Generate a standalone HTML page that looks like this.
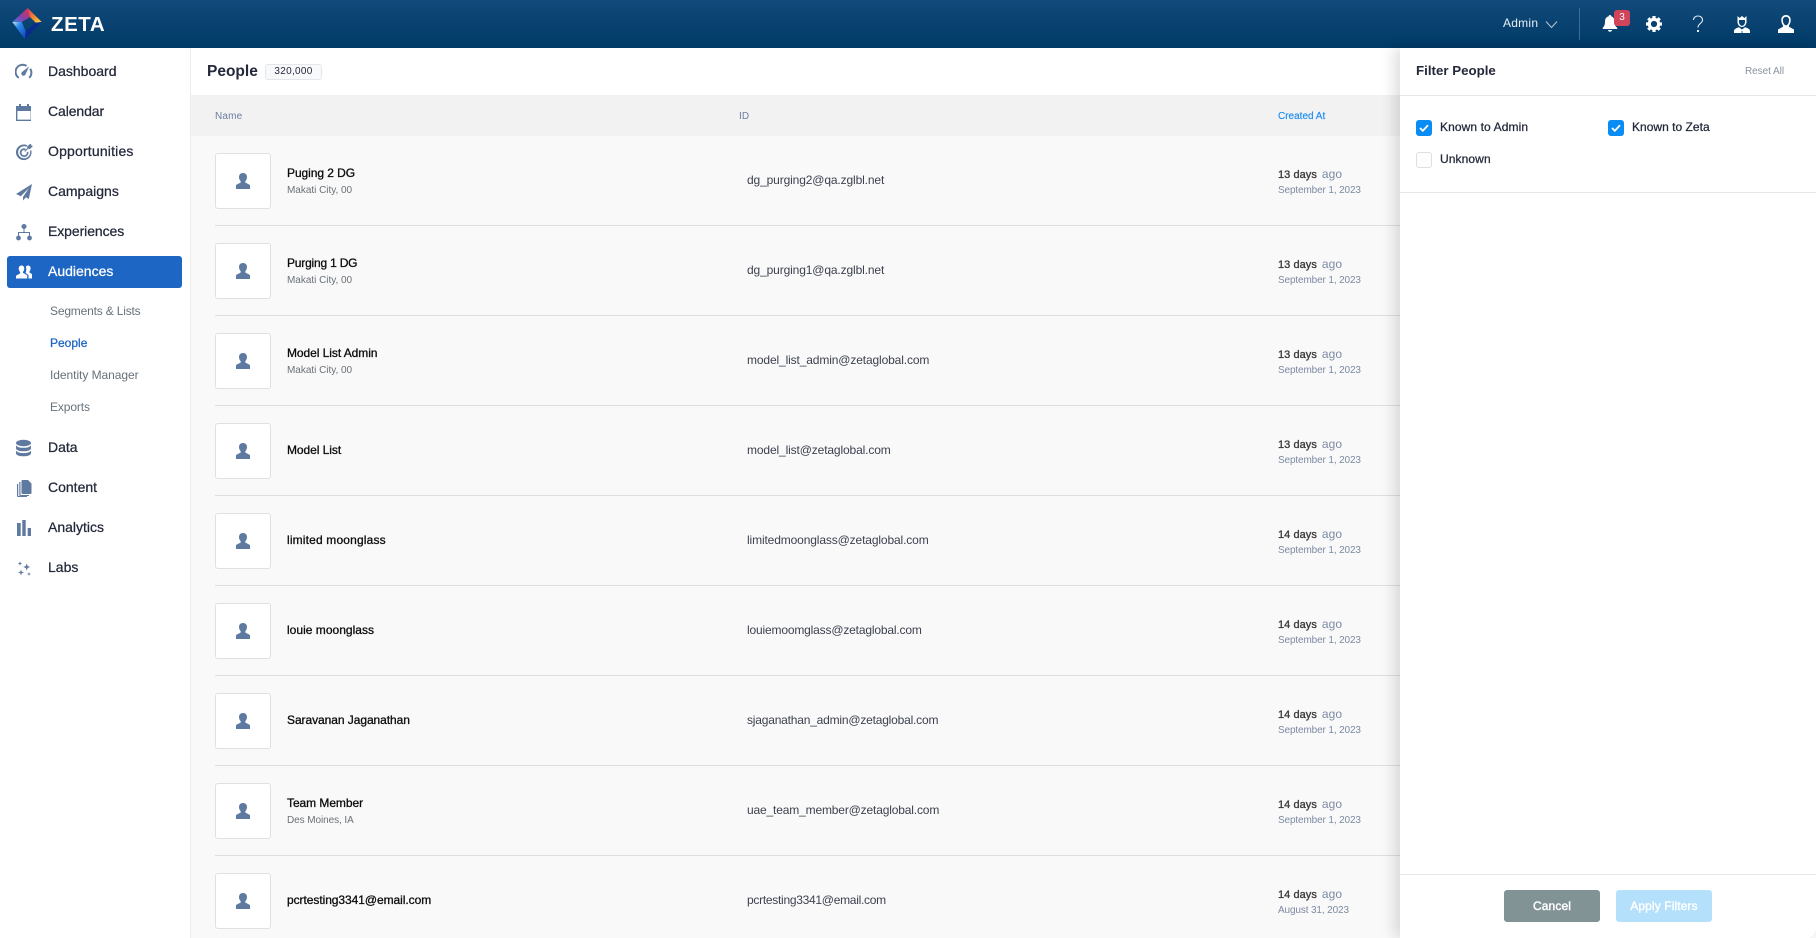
<!DOCTYPE html>
<html><head><meta charset="utf-8"><title>People</title>
<style>
html,body{margin:0;padding:0;width:1816px;height:938px;overflow:hidden;background:#2a1410}
body{font-family:"Liberation Sans",sans-serif;position:relative}
.a,.t{position:absolute}
.t{white-space:nowrap;line-height:16px;height:16px}
#bg{left:0;top:48px;width:1816px;height:890px;background:#f9f9f9}
#hdr{left:0;top:0;width:1816px;height:48px;background:linear-gradient(#124a7b,#003a66)}
#side{left:0;top:48px;width:190px;height:890px;background:#fff;border-right:1px solid #ececec}
#top{left:191px;top:48px;width:1209px;height:47px;background:#fff}
#th{left:191px;top:95px;width:1209px;height:41px;background:#f2f2f2}
.n{left:48px;font-size:14px;color:#23283a;-webkit-text-stroke:.25px #23283a;letter-spacing:0}
.s{left:50px;font-size:12px;color:#68717a;letter-spacing:-.12px}
.ic{position:absolute;left:15px;width:18px;height:18px;fill:#5f7aa0}
.h{font-size:10px;color:#6b7f9e;letter-spacing:.15px}
.l{left:215px;width:1185px;height:1px;background:#dedede}
.av{left:215px;width:54px;height:54px;background:#fff;border:1px solid #e0e0e0;border-radius:3px}
.av svg{position:absolute;left:20px;top:19px;width:14px;height:16px;fill:#5f7aa0}
.nm{left:287px;font-size:12px;color:#0c0c0c;-webkit-text-stroke:.3px #0c0c0c;letter-spacing:-.06px}
.sb{left:287px;font-size:10px;color:#6a7177;letter-spacing:-.02px}
.id{left:747px;font-size:12px;color:#3d4150;letter-spacing:-.13px}
.dy{left:1278px;font-size:11px;color:#3c3c3c;letter-spacing:.05px}
.dy b{font-weight:normal;-webkit-text-stroke:.35px #3c3c3c;margin-right:5px}
.dy i{font-style:normal;color:#7d8aa3;font-size:12px}
.dt{left:1278px;font-size:10px;color:#7d8aa3;letter-spacing:-.13px}
#panel{left:1400px;top:48px;width:416px;height:890px;background:#fff;border-bottom-right-radius:10px;box-shadow:-6px 0 14px rgba(0,0,0,.13)}
.pl{left:1400px;width:416px;height:1px;background:#e6e6e6}
.cb{left:1416px;width:16px;height:16px;border-radius:3px;background:#0a8cf5}
.cb svg{position:absolute;left:3px;top:4px;width:10px;height:8px}
.cl{font-size:12px;color:#23283a;-webkit-text-stroke:.25px #23283a;letter-spacing:.1px}
.btn{top:890px;width:96px;height:32px;border-radius:3px;color:#fff;font-size:12px;-webkit-text-stroke:.4px #fff;text-align:center;line-height:32px;letter-spacing:.12px}
</style></head><body>
<svg width="0" height="0" style="position:absolute"><symbol id="p" viewBox="0 0 14 16"><path d="M7 0c2.500 0 4 1.700 4 4 0 1.700-.7 3.200-1.700 4.200v1.300L14 12v4H0v-4l4.700-2.500V8.200C3.700 7.200 3 5.700 3 4c0-2.300 1.500-4 4-4z"/></symbol></svg>
<div class="a" id="bg"></div>
<div class="a" id="top"></div>
<div class="a" id="th"></div>

<div class="a" id="hdr"></div>
<svg class="a" style="left:10px;top:6px" width="34" height="36" viewBox="0 0 34 36">
<defs>
<linearGradient id="g1" x1="0" y1="1" x2="1" y2="0"><stop offset="0" stop-color="#3f7ae0"/><stop offset=".45" stop-color="#8a3fa8"/><stop offset="1" stop-color="#e8304e"/></linearGradient>
<linearGradient id="g2" x1="0" y1="0" x2="1" y2="1"><stop offset="0" stop-color="#e83a50"/><stop offset=".55" stop-color="#f08a30"/><stop offset="1" stop-color="#f9e04a"/></linearGradient>
<linearGradient id="g3" x1="0" y1="0" x2="1" y2="1"><stop offset="0" stop-color="#c8e8fa"/><stop offset=".35" stop-color="#2a8ae8"/><stop offset="1" stop-color="#0f3fb8"/></linearGradient>
</defs>
<polygon points="2.300,16 17.700,2 20,11 11.700,16" fill="url(#g1)"/>
<polygon points="17.700,2 31.700,16 25.700,16.700 20,11" fill="url(#g2)"/>
<polygon points="2.300,16 11.700,16 15.700,25.300 15,33.300" fill="url(#g3)"/>
<polygon points="31.700,16 25.700,16.700 15.700,25.300 15,33.300" fill="#0a2a8c"/>
</svg>
<div class="t" style="left:51px;top:14px;height:22px;line-height:22px;font-size:20.5px;color:#fff;font-weight:bold;letter-spacing:.55px">ZETA</div>

<div class="t" style="left:1503px;top:15px;font-size:12px;color:#e8eef4;letter-spacing:.25px">Admin</div>
<svg class="a" style="left:1545px;top:20px" width="13" height="9" viewBox="0 0 13 9"><path d="M1 1.500 6.500 7.500 12 1.500" fill="none" stroke="#b8c8d8" stroke-width="1"/></svg>
<div class="a" style="left:1579px;top:8px;width:1px;height:32px;background:#3f6c92"></div>
<svg class="a" style="left:1601px;top:14px" width="18" height="18" viewBox="0 0 18 18" fill="#fff"><path d="M9 1c-.8 0-1.300.6-1.300 1.300C5.200 3 4 5 4 7.500c0 3.500-1 5-2.200 6.300-.4.500-.1 1.200.5 1.200h13.400c.6 0 .9-.7.500-1.200C14.500 12.500 13.500 11 13.500 7.500c0-2.500-1.200-4.500-3.200-5.200C10.300 1.600 9.800 1 9 1zM6.800 16c.3 1 1.200 1.700 2.200 1.700s1.900-.7 2.200-1.700z"/></svg>
<div class="a" style="left:1614px;top:10px;width:16px;height:16px;border-radius:3px;background:#d2445a;color:#fff;font-size:10px;line-height:15px;text-align:center">3</div>
<svg class="a" style="left:1646px;top:16px" width="16" height="16" viewBox="0 0 16 16"><circle cx="8" cy="8" r="4.700" fill="none" stroke="#fff" stroke-width="3.200"/><path d="M8 0v3M8 13v3M0 8h3M13 8h3M2.300 2.300l2.100 2.100M11.600 11.600l2.100 2.100M13.700 2.300l-2.100 2.100M4.400 11.600l-2.100 2.100" stroke="#fff" stroke-width="3.200"/></svg>
<svg class="a" style="left:1692px;top:15px" width="12" height="18" viewBox="0 0 12 18"><path d="M1.500 5C1.500 2.500 3.500 1 6 1s4.500 1.500 4.500 4c0 3.500-4.500 3.500-4.500 7.500" fill="none" stroke="#dfe8f0" stroke-width="1.100"/><circle cx="6" cy="16" r="1.100" fill="#fff"/></svg>
<svg class="a" style="left:1734px;top:15px" width="16" height="18" viewBox="0 0 16 18" fill="#fff"><path d="M3.500 1 5.500 3 8 1l2.500 2 2-2v6c0 2.500-2 5-4.500 5S3.500 9.500 3.500 7zM5 5v2c0 2 1.400 3.800 3 3.800S11 9 11 7V5z"/><path d="M0 18v-2c0-1.800 2.500-3 5-3.700l3 2.200 3-2.200c2.500.7 5 1.900 5 3.700v2z"/><path d="M7 16h2v2H7z" fill="#8fb4d8"/></svg>
<svg class="a" style="left:1778px;top:15px" width="16" height="18" viewBox="0 0 16 18" fill="#fff"><path d="M8 0C5 0 3.300 2.200 3.300 5c0 2 .7 4 1.700 5.500v1.300L0 14.500V18h16v-3.500l-5-2.700v-1.300C12 9 12.700 7 12.700 5 12.700 2.200 11 0 8 0zM8 1.800c2 0 3.100 1.500 3.100 3.300 0 2.800-1.500 5.200-3.100 5.200S4.900 7.900 4.900 5.100C4.900 3.300 6 1.800 8 1.800z"/></svg>

<div class="a" id="side"></div>
<svg class="ic" style="top:63px" viewBox="0 0 18 18"><path d="M3.800 14.800A7 7 0 0 1 11.500 2.900M15.200 5.800A7 7 0 0 1 14.200 14.800" fill="none" stroke="#5f7aa0" stroke-width="2"/><path d="M14 3.500 10.400 11.600a2.200 2.200 0 1 1-3.100-2.900z"/></svg>
<svg class="ic" style="top:103px" viewBox="0 0 18 18"><path d="M2 3h2V1h2v2h6V1h2v2h2V18H1V3zM2.400 8v8.600h13.200V8z"/></svg>
<svg class="ic" style="top:143px" viewBox="0 0 18 18"><path d="M9 1.500c1.300 0 2.500.3 3.500.9l-1.100 1.300A6 6 0 1 0 15 8l1.200-1A7.800 7.800 0 1 1 9 1.500z"/><path d="M9 5.200c.6 0 1 .1 1.500.3l-.2 1.700A2.700 2.700 0 1 0 11.800 9l1.600-.3A4.400 4.400 0 1 1 9 5.200z"/><path d="M16 1l.4 1.600 1.600.4-3 3-1.900-.2-3 3-.8-.8 3-3L12.200 3.500 15 1z"/></svg>
<svg class="ic" style="top:183px" viewBox="0 0 18 18"><path d="M17 1 1 11l4.800 2.200L14 5 8 14v3.500l3-3.200 2.800 1.700z"/></svg>
<svg class="ic" style="top:223px" viewBox="0 0 18 18"><circle cx="9" cy="3.500" r="2.500"/><circle cx="3.500" cy="15" r="2.400"/><circle cx="14.500" cy="15" r="2.400"/><path d="M8.500 5h1v4h5.500v4h-1v-3H4v3H3V9h5.500z"/></svg>
<div class="a" style="left:7px;top:256px;width:175px;height:32px;background:#1e66c4;border-radius:3px"></div>
<svg class="ic" style="top:263px;fill:#fff" viewBox="0 0 18 18"><path d="M6.500 2.500c1.700 0 2.800 1.300 2.800 3 0 1.300-.6 2.600-1.300 3.400v1l4.200 2.300V15.500H1v-2.800l4.200-2.300v-1C4.400 8 3.700 6.800 3.700 5.500c0-1.700 1.100-3 2.800-3z"/><path d="M13 2.500c1.600 0 2.600 1.200 2.600 2.800 0 1.200-.5 2.400-1.200 3.200v1L17 11v4.500h-3.500V12L10.500 10c.5-1.200.8-2.500.8-3.700 0-1.200-.2-2-.5-2.700.5-.5 1.300-1.100 2.200-1.100z"/></svg>
<div class="t n" style="top:63px">Dashboard</div>
<div class="t n" style="top:103px;letter-spacing:-.1px">Calendar</div>
<div class="t n" style="top:143px;letter-spacing:.18px">Opportunities</div>
<div class="t n" style="top:183px">Campaigns</div>
<div class="t n" style="top:223px;letter-spacing:-.08px">Experiences</div>
<div class="t n" style="top:263px;color:#fff;-webkit-text-stroke:.25px #fff">Audiences</div>
<div class="t s" style="top:303px;letter-spacing:-.18px">Segments &amp; Lists</div>
<div class="t s" style="top:335px;color:#1e66c4;-webkit-text-stroke:.3px #1e66c4;letter-spacing:0">People</div>
<div class="t s" style="top:367px;letter-spacing:-.05px">Identity Manager</div>
<div class="t s" style="top:399px">Exports</div>
<svg class="ic" style="top:439px" viewBox="0 0 18 18"><ellipse cx="8.500" cy="4" rx="7.500" ry="3.200"/><path d="M1 6.200C2 8 5 8.800 8.500 8.800s6.500-.8 7.500-2.600v3c0 1.800-3.400 3.100-7.500 3.100S1 11 1 9.200z"/><path d="M1 11.500c1 1.800 4 2.600 7.500 2.600s6.500-.8 7.500-2.600v2.700c0 1.800-3.400 3.100-7.500 3.100S1 16 1 14.200z"/></svg>
<svg class="ic" style="top:479px" viewBox="0 0 18 18"><path d="M7.500 1H13l3.500 3.500V14a1 1 0 0 1-1 1H7.500a1 1 0 0 1-1-1V2a1 1 0 0 1 1-1z"/><path d="M4.300 3h1.200v13H14v1H5.300a1 1 0 0 1-1-1zM2 5h1.200v12H12v1H3a1 1 0 0 1-1-1z"/></svg>
<svg class="ic" style="top:519px" viewBox="0 0 18 18"><rect x="2" y="4" width="3.700" height="13"/><rect x="7.300" y="1" width="3.400" height="16"/><rect x="12.700" y="9" width="3.300" height="8"/></svg>
<svg class="ic" style="top:559px" viewBox="0 0 18 18"><path d="M11.700 4.500 12.700 7 15.200 8 12.700 9 11.700 11.500 10.700 9 8.200 8 10.700 7zM5 2.300 5.600 3.900 7.200 4.500 5.600 5.100 5 6.700 4.400 5.100 2.800 4.500 4.400 3.900zM6 10.500 6.800 12.700 9 13.500 6.800 14.300 6 16.500 5.200 14.300 3 13.500 5.200 12.700zM14 13 14.500 14.500 16 15 14.500 15.500 14 17 13.500 15.500 12 15 13.500 14.500z"/></svg>
<div class="t n" style="top:439px">Data</div>
<div class="t n" style="top:479px">Content</div>
<div class="t n" style="top:519px">Analytics</div>
<div class="t n" style="top:559px">Labs</div>

<div class="t" style="left:207px;top:63px;height:18px;line-height:18px;font-size:15.5px;color:#23283a;font-weight:bold">People</div>
<div class="a" style="left:265px;top:64px;width:55px;height:14px;border:1px solid #e4e6ea;border-radius:3px;background:#f8f9fa;font-size:10px;line-height:14px;text-align:center;color:#23283a;letter-spacing:.3px">320,000</div>
<div class="t h" style="left:215px;top:109px">Name</div>
<div class="t h" style="left:739px;top:109px">ID</div>
<div class="t h" style="left:1278px;top:109px;color:#1b8cf0;-webkit-text-stroke:.15px #1b8cf0;letter-spacing:0">Created At</div>

<div class="a l" style="top:225px"></div><div class="a l" style="top:315px"></div><div class="a l" style="top:405px"></div><div class="a l" style="top:495px"></div><div class="a l" style="top:585px"></div><div class="a l" style="top:675px"></div><div class="a l" style="top:765px"></div><div class="a l" style="top:855px"></div>

<div class="a av" style="top:153px"><svg viewBox="0 0 14 16"><use href="#p"/></svg></div>
<div class="t nm" style="top:165px">Puging 2 DG</div><div class="t sb" style="top:183px">Makati City, 00</div>
<div class="t id" style="top:172px">dg_purging2@qa.zglbl.net</div>
<div class="t dy" style="top:166px"><b>13 days</b><i>ago</i></div><div class="t dt" style="top:183px">September 1, 2023</div>

<div class="a av" style="top:243px"><svg viewBox="0 0 14 16"><use href="#p"/></svg></div>
<div class="t nm" style="top:255px;letter-spacing:-.2px">Purging 1 DG</div><div class="t sb" style="top:273px">Makati City, 00</div>
<div class="t id" style="top:262px">dg_purging1@qa.zglbl.net</div>
<div class="t dy" style="top:256px"><b>13 days</b><i>ago</i></div><div class="t dt" style="top:273px">September 1, 2023</div>

<div class="a av" style="top:333px"><svg viewBox="0 0 14 16"><use href="#p"/></svg></div>
<div class="t nm" style="top:345px">Model List Admin</div><div class="t sb" style="top:363px">Makati City, 00</div>
<div class="t id" style="top:352px">model_list_admin@zetaglobal.com</div>
<div class="t dy" style="top:346px"><b>13 days</b><i>ago</i></div><div class="t dt" style="top:363px">September 1, 2023</div>

<div class="a av" style="top:423px"><svg viewBox="0 0 14 16"><use href="#p"/></svg></div>
<div class="t nm" style="top:442px">Model List</div>
<div class="t id" style="top:442px">model_list@zetaglobal.com</div>
<div class="t dy" style="top:436px"><b>13 days</b><i>ago</i></div><div class="t dt" style="top:453px">September 1, 2023</div>

<div class="a av" style="top:513px"><svg viewBox="0 0 14 16"><use href="#p"/></svg></div>
<div class="t nm" style="top:532px;letter-spacing:.16px">limited moonglass</div>
<div class="t id" style="top:532px">limitedmoonglass@zetaglobal.com</div>
<div class="t dy" style="top:526px"><b>14 days</b><i>ago</i></div><div class="t dt" style="top:543px">September 1, 2023</div>

<div class="a av" style="top:603px"><svg viewBox="0 0 14 16"><use href="#p"/></svg></div>
<div class="t nm" style="top:622px;letter-spacing:.02px">louie moonglass</div>
<div class="t id" style="top:622px;letter-spacing:-.17px">louiemoomglass@zetaglobal.com</div>
<div class="t dy" style="top:616px"><b>14 days</b><i>ago</i></div><div class="t dt" style="top:633px">September 1, 2023</div>

<div class="a av" style="top:693px"><svg viewBox="0 0 14 16"><use href="#p"/></svg></div>
<div class="t nm" style="top:712px">Saravanan Jaganathan</div>
<div class="t id" style="top:712px;letter-spacing:-.2px">sjaganathan_admin@zetaglobal.com</div>
<div class="t dy" style="top:706px"><b>14 days</b><i>ago</i></div><div class="t dt" style="top:723px">September 1, 2023</div>

<div class="a av" style="top:783px"><svg viewBox="0 0 14 16"><use href="#p"/></svg></div>
<div class="t nm" style="top:795px">Team Member</div><div class="t sb" style="top:813px;letter-spacing:-.08px">Des Moines, IA</div>
<div class="t id" style="top:802px;letter-spacing:-.16px">uae_team_member@zetaglobal.com</div>
<div class="t dy" style="top:796px"><b>14 days</b><i>ago</i></div><div class="t dt" style="top:813px">September 1, 2023</div>

<div class="a av" style="top:873px"><svg viewBox="0 0 14 16"><use href="#p"/></svg></div>
<div class="t nm" style="top:892px">pcrtesting3341@email.com</div>
<div class="t id" style="top:892px;letter-spacing:-.28px">pcrtesting3341@email.com</div>
<div class="t dy" style="top:886px"><b>14 days</b><i>ago</i></div><div class="t dt" style="top:903px">August 31, 2023</div>

<div class="a" id="panel"></div>
<div class="t" style="left:1416px;top:62px;font-size:13.3px;height:18px;line-height:18px;color:#23283a;font-weight:bold">Filter People</div>
<div class="t" style="left:1745px;top:64px;font-size:10px;color:#8a92a0;letter-spacing:-.05px">Reset All</div>
<div class="a pl" style="top:95px"></div>
<div class="a cb" style="top:120px"><svg viewBox="0 0 10 8"><path d="M1 4 3.800 6.800 9 1.200" fill="none" stroke="#fff" stroke-width="1.800"/></svg></div>
<div class="t cl" style="left:1440px;top:119px">Known to Admin</div>
<div class="a cb" style="top:120px;left:1608px"><svg viewBox="0 0 10 8"><path d="M1 4 3.800 6.800 9 1.200" fill="none" stroke="#fff" stroke-width="1.800"/></svg></div>
<div class="t cl" style="left:1632px;top:119px;letter-spacing:.02px">Known to Zeta</div>
<div class="a" style="left:1416px;top:152px;width:14px;height:14px;border:1px solid #dcdfe3;border-radius:3px;background:#fff"></div>
<div class="t cl" style="left:1440px;top:151px">Unknown</div>
<div class="a pl" style="top:192px"></div>
<div class="a pl" style="top:874px"></div>
<div class="a btn" style="left:1504px;background:#829396">Cancel</div>
<div class="a btn" style="left:1616px;background:#b4e0fc">Apply Filters</div>
</body></html>
